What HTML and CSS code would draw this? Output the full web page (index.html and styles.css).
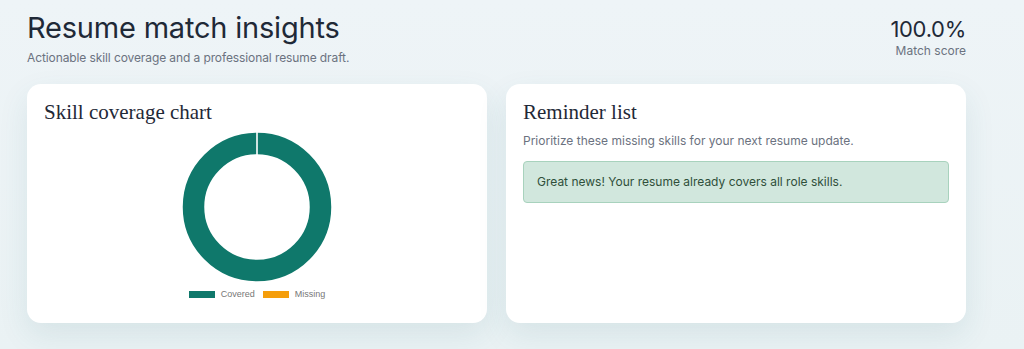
FILE: index.html
```html
<!DOCTYPE html>
<html>
<head>
<meta charset="utf-8">
<link rel="stylesheet" href="styles.css">
</head>
<body>
<div class="page">
  <header class="head">
    <div class="head-left">
      <h1 class="title">Resume match insights</h1>
      <p class="subtitle">Actionable skill coverage and a professional resume draft.</p>
    </div>
    <div class="score">
      <div class="score-value">100.0%</div>
      <div class="score-label">Match score</div>
    </div>
  </header>
  <div class="cards">
    <section class="card">
      <h2 class="card-title">Skill coverage chart</h2>
      <div class="chart">
        <svg class="donut" width="150" height="150" viewBox="0 0 150 150">
          <circle cx="75" cy="75" r="63.5" fill="none" stroke="#0f786b" stroke-width="21.5"/>
          <line x1="75" y1="0" x2="75" y2="23" stroke="#ffffff" stroke-width="1.6"/>
        </svg>
        <div class="legend">
          <span class="legend-item"><span class="swatch swatch-covered"></span>Covered</span>
          <span class="legend-item"><span class="swatch swatch-missing"></span>Missing</span>
        </div>
      </div>
    </section>
    <section class="card">
      <h2 class="card-title card-title-right">Reminder list</h2>
      <p class="card-text">Prioritize these missing skills for your next resume update.</p>
      <div class="alert">Great news! Your resume already covers all role skills.</div>
    </section>
  </div>
</div>
</body>
</html>
```
FILE: styles.css
```css
html, body {
  margin: 0;
  padding: 0;
}
body {
  width: 1024px;
  height: 349px;
  overflow: hidden;
  background: linear-gradient(180deg, #eef4f7 0%, #eaf2f4 100%);
  font-family: Inter, "Noto Sans", sans-serif;
  color: #1f2a37;
}
.page {
  width: 939px;
  margin-left: 27px;
  padding-top: 12px;
}
.head {
  display: flex;
  justify-content: space-between;
  align-items: flex-start;
}
.title {
  margin: 0;
  font-size: 29px;
  font-weight: 400;
  line-height: 32px;
  letter-spacing: -0.2px;
  color: #1f2937;
}
.subtitle {
  margin: 6px 0 0;
  font-size: 12px;
  line-height: 16px;
  letter-spacing: -0.1px;
  color: #6b7280;
}
.score {
  text-align: right;
  padding-top: 4px;
}
.score-value {
  font-size: 22px;
  line-height: 26px;
  font-weight: 400;
  color: #1f2937;
  letter-spacing: -0.3px;
}
.score-label {
  font-size: 12px;
  line-height: 16px;
  color: #6b7280;
  margin-top: 1px;
}
.cards {
  display: grid;
  grid-template-columns: 460px 460px;
  gap: 19px;
  margin-top: 18px;
}
.card {
  background: #ffffff;
  border-radius: 14px;
  height: 239px;
  box-sizing: border-box;
  padding: 16px 17px;
  box-shadow: 0 12px 30px rgba(40, 110, 120, 0.10);
}
.card-title {
  margin: 0;
  font-family: "Liberation Serif", "DejaVu Serif", serif;
  font-weight: 400;
  font-size: 21px;
  line-height: 24px;
  color: #1f2937;
}
.chart {
  display: flex;
  flex-direction: column;
  align-items: center;
  margin-top: 8px;
}
.donut {
  display: block;
}
.legend {
  display: flex;
  gap: 8px;
  margin-top: 6px;
  font-family: "Liberation Sans", Arial, sans-serif;
  font-size: 9px;
  color: #777777;
  line-height: 12px;
}
.legend-item {
  display: flex;
  align-items: center;
  gap: 6px;
}
.swatch {
  display: inline-block;
  width: 26px;
  height: 7px;
}
.swatch-covered { background: #0f786b; }
.swatch-missing { background: #f59e0b; }
.card-title-right {
  margin-top: 0;
}
.card-text {
  margin: 9px 0 0;
  font-size: 12px;
  line-height: 16px;
  color: #6b7280;
}
.alert {
  margin-top: 12px;
  background: #d1e7dd;
  border: 1px solid #a8d2bd;
  border-radius: 4px;
  padding: 12px 13px;
  font-size: 12px;
  line-height: 16px;
  color: #2f4f3a;
}
```
